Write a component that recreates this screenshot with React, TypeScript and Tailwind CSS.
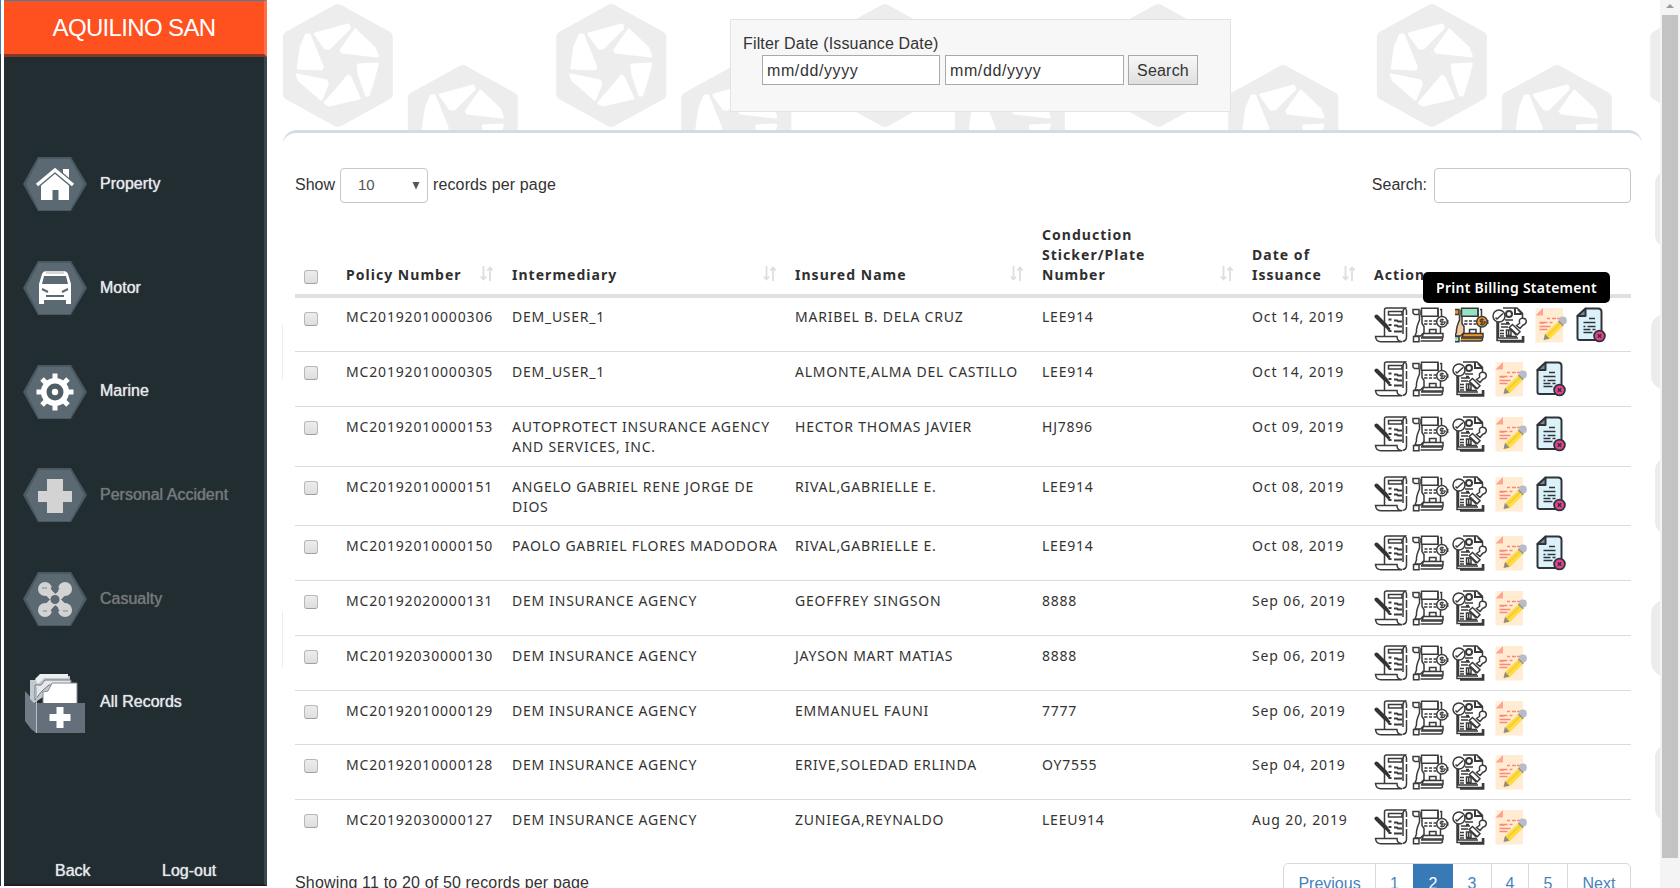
import React from "react";

type Row = {
  policy: string;
  agent: string;
  insured: string;
  plate: string;
  date: string;
  height: string;
  kind: "billing" | "full" | "short";
};

const ROWS: Row[] = [
  { policy: "MC20192010000306", agent: "DEM_USER_1", insured: "MARIBEL B. DELA CRUZ", plate: "LEE914", date: "Oct 14, 2019", height: "h-[54px]", kind: "billing" },
  { policy: "MC20192010000305", agent: "DEM_USER_1", insured: "ALMONTE,ALMA DEL CASTILLO", plate: "LEE914", date: "Oct 14, 2019", height: "h-[55px]", kind: "full" },
  { policy: "MC20192010000153", agent: "AUTOPROTECT INSURANCE AGENCY AND SERVICES, INC.", insured: "HECTOR THOMAS JAVIER", plate: "HJ7896", date: "Oct 09, 2019", height: "h-[60px]", kind: "full" },
  { policy: "MC20192010000151", agent: "ANGELO GABRIEL RENE JORGE DE DIOS", insured: "RIVAL,GABRIELLE E.", plate: "LEE914", date: "Oct 08, 2019", height: "h-[59px]", kind: "full" },
  { policy: "MC20192010000150", agent: "PAOLO GABRIEL FLORES MADODORA", insured: "RIVAL,GABRIELLE E.", plate: "LEE914", date: "Oct 08, 2019", height: "h-[55px]", kind: "full" },
  { policy: "MC20192020000131", agent: "DEM INSURANCE AGENCY", insured: "GEOFFREY SINGSON", plate: "8888", date: "Sep 06, 2019", height: "h-[55px]", kind: "short" },
  { policy: "MC20192030000130", agent: "DEM INSURANCE AGENCY", insured: "JAYSON MART MATIAS", plate: "8888", date: "Sep 06, 2019", height: "h-[55px]", kind: "short" },
  { policy: "MC20192010000129", agent: "DEM INSURANCE AGENCY", insured: "EMMANUEL FAUNI", plate: "7777", date: "Sep 06, 2019", height: "h-[54px]", kind: "short" },
  { policy: "MC20192010000128", agent: "DEM INSURANCE AGENCY", insured: "ERIVE,SOLEDAD ERLINDA", plate: "OY7555", date: "Sep 04, 2019", height: "h-[55px]", kind: "short" },
  { policy: "MC20192030000127", agent: "DEM INSURANCE AGENCY", insured: "ZUNIEGA,REYNALDO", plate: "LEEU914", date: "Aug 20, 2019", height: "h-[55px]", kind: "short" },
];

const GRID = "grid grid-cols-[51px_166px_283px_247px_210px_122px_257px]";

/* ---------- background pattern ---------- */

function Aperture({ x, y }: { x: number; y: number }) {
  return (
    <g transform={`translate(${x} ${y})`}>
      <path d="M55.5 6 104.5 33V90L55.5 117 6.5 90V33Z" fill="#ededed" stroke="#ededed" strokeWidth="12" strokeLinejoin="round" />
      <g fill="#fff" stroke="#fff" strokeWidth="3" strokeLinejoin="round">
        <path d="M33 30 66 21 67 24 47 44 43 44Z" />
        <path d="M73 26 92 44 95 52 60 48 59 46Z" />
        <path d="M76 61 95 60 91 75 86 91 84 91 77 70Z" />
        <path d="M66 72 68 74 77 94 47 101 43 99Z" />
        <path d="M15 71 44 77 45 80 39 95 17 76Z" />
        <path d="M24 31 27 31 40 63 39 65 16 64 19 43Z" />
      </g>
    </g>
  );
}

function Backdrop() {
  return (
    <svg className="absolute left-0 top-0" width="1393" height="888" viewBox="267 0 1393 888">
      <clipPath id="band"><rect x="267" y="0" width="1393" height="131" /></clipPath>
      <g clipPath="url(#band)">
        {[0, 1, 2, 3, 4, 5].map((i) => (
          <Aperture key={i} x={282.3 + i * 273.5} y={4} />
        ))}
        {[0, 1, 2, 3, 4].map((i) => (
          <Aperture key={i} x={407.3 + i * 273.5} y={65} />
        ))}
      </g>
      <g fill="#ececec">
        <path d="M1660 173q-5 5-5 10v52q0 6 5 10z" />
        <path d="M1660 315q-9 4-9 13v48q0 8 9 13z" />
        <path d="M1660 460q-5 5-5 10v52q0 6 5 10z" />
        <path d="M1660 601q-9 4-9 13v48q0 8 9 14z" />
        <path d="M1660 747q-5 5-5 10v52q0 6 5 10z" />
        <path d="M282 325h1v55h-1zM282 611h1v56h-1z" />
      </g>
    </svg>
  );
}

/* ---------- sidebar icons ---------- */

function Hexagon({ children }: { children: React.ReactNode }) {
  return (
    <svg width="66" height="56" viewBox="0 0 66 56" className="shrink-0">
      <path d="M16 1h33L65 28 49 55H16L1 28Z" fill="#4b5963" />
      <path d="M17 3h31L62 28 48 54H17L4 28Z" fill="#5b6973" />
      {children}
    </svg>
  );
}

const HouseIcon = () => (
  <Hexagon>
    <path d="M19 27 33 15 47 27V44H36.5V34h-6v10H19Z" fill="#fff" />
    <path d="M41 13h6v10l-6-5z" fill="#fff" />
    <path d="m14 30 19-16 19 16" fill="none" stroke="#5b6973" strokeWidth="6" />
    <path d="m15 29 18-15 18 15" fill="none" stroke="#fff" strokeWidth="3.4" />
  </Hexagon>
);

const CarIcon = () => (
  <Hexagon>
    <path d="M20 14q1-3 5-3h16q4 0 5 3l3 10v20h-5v-4H22v4h-5V24Z" fill="#fff" />
    <path d="M22 16h22l2 8H20Z" fill="#5b6973" />
    <path d="M24 12.5h18" stroke="#d4d8da" strokeWidth="3" />
    <path d="m20 29 6 3m20-3-6 3M24 36h18" stroke="#5b6973" strokeWidth="2" />
  </Hexagon>
);

const GearIcon = () => (
  <Hexagon>
    <g stroke="#fff" strokeWidth="5">
      <path d="M33 9.500V46.500M14.500 28H51.500M20 15 46 41M46 15 20 41" />
    </g>
    <circle cx="33" cy="28" r="14" fill="#fff" />
    <circle cx="33" cy="28" r="8.500" fill="#4f5d67" />
    <circle cx="33" cy="28" r="3.200" fill="#fff" />
  </Hexagon>
);

const CrossIcon = () => (
  <Hexagon>
    <path d="M25 12h16v12h9v11h-9v11H25V35h-9V24h9Z" fill="#d3d3d3" />
  </Hexagon>
);

const CasualtyIcon = () => (
  <Hexagon>
    <path d="M23 18 44 39M44 18 23 39" stroke="#d3d3d3" strokeWidth="8" />
    <g fill="#d3d3d3">
      <circle cx="23" cy="18" r="7" /><circle cx="43" cy="18" r="7" />
      <circle cx="23" cy="39" r="7" /><circle cx="43" cy="39" r="7" />
    </g>
    <circle cx="33" cy="28.500" r="4.500" fill="#5b6973" />
    <path d="m29 17 4 4 4-4M29 40l4-4 4 4" stroke="#5b6973" fill="none" strokeWidth="1.500" />
    <path d="M20 17h5M41 40h5M21 40h4" stroke="#a7adb1" strokeWidth="2" />
  </Hexagon>
);

const RecordsIcon = () => (
  <svg width="66" height="64" viewBox="0 0 66 64" className="shrink-0">
    <path d="M3 20 14 32V62L9 58 3 50Z" fill="#717a86" />
    <path d="M8 9h7l3-4h30v9h-9L12 32 8 28Z" fill="#c3c8cf" />
    <path d="M13 8 18 3h28v4H22l-6 6Z" fill="#eceef0" />
    <path d="M13 14h6l4-5h26v5H27l-7 6-7 9Z" fill="#e5e7ea" stroke="#707985" strokeWidth="1" />
    <path d="M21 33V21l5-1 4-8h25v21Z" fill="#fff" stroke="#818a94" />
    <path d="M14 32h49v30H14Z" fill="#656f7c" />
    <path d="M14.500 16v46" stroke="#b8bec5" />
    <path d="M34.500 36h7v7h7v7h-7v7h-7v-7h-7v-7h7Z" fill="#fff" />
  </svg>
);

const NAV = [
  { label: "Property", icon: <HouseIcon />, tone: "text-[#e4e8ea]" },
  { label: "Motor", icon: <CarIcon />, tone: "text-[#e4e8ea]" },
  { label: "Marine", icon: <GearIcon />, tone: "text-[#e4e8ea]" },
  { label: "Personal Accident", icon: <CrossIcon />, tone: "text-[#74797b]" },
  { label: "Casualty", icon: <CasualtyIcon />, tone: "text-[#74797b]" },
  { label: "All Records", icon: <RecordsIcon />, tone: "text-[#e4e8ea]" },
];

function Sidebar() {
  return (
    <aside className="flex h-[888px] w-[267px] shrink-0 flex-col bg-white">
      <div className="flex h-[886px]">
        <div className="flex w-px flex-col">
          <div className="h-[54px] bg-[#3d82ad]" />
          <div className="grow bg-[#2a3744]" />
        </div>
        <div className="ml-[3px] flex w-[263px] flex-col border-r-[3px] border-b-2 border-r-[#3c474d] border-b-[#251d20] bg-[#222d32]">
          <div className="-mr-[3px] flex h-[57px] shrink-0 items-center justify-center border-t border-b-[3px] border-t-[#3d82ad] border-b-[#82382a] border-r-[3px] border-r-[#ff7048] bg-[#ff5020]">
            <span className="whitespace-nowrap text-[24px] leading-none tracking-[-0.65px] text-white">AQUILINO SAN</span>
          </div>
          <nav className="flex flex-col pt-[75.500px]">
            {NAV.map((n) => (
              <a key={n.label} className="flex h-[103.700px] items-center pl-[18px]">
                {n.icon}
                <span className={`mb-px ml-[12px] whitespace-nowrap text-[16px] leading-none ${n.tone} [text-shadow:0_0_1px_currentColor]`}>{n.label}</span>
              </a>
            ))}
          </nav>
          <div className="mt-auto mb-[4px] flex pl-[51px] text-[16px] leading-[18px] text-[#e4e8ea] [text-shadow:0_0_1px_currentColor]">
            <span className="w-[107px]">Back</span>
            <span>Log-out</span>
          </div>
        </div>
      </div>
    </aside>
  );
}

/* ---------- action icons ---------- */

const INK = "#3b3b3b";

const ChecklistIcon = () => (
  <svg width="36" height="36" viewBox="0 0 36 36" fill="none" stroke={INK} strokeWidth="1.500">
    <path d="M10.500 29V3q0-2 2-2H31q-2 1.500-2 4V27" fill="#fff" />
    <path d="M31 1q1.500 1 1.500 3v4M32.500 10v8M32.500 20v10q0 4-4 4.500" />
    <path d="M14.500 4.500h13.500v3.500h-13.500z" />
    <path d="M14.500 12.500h3M20 13.500h3l1 1h4M14.500 18h3M20 18.500h3l1 1h4M14.500 24h3M20 24.500h8" strokeWidth="2" />
    <path d="M1.500 29.500h21.500q0 5 5 5.200H7q-5 0-5.500-5.200Z" fill="#fff" />
    <path d="m2.500 9.500 9 9" strokeWidth="4" stroke="#333" strokeLinecap="round" />
    <path d="m11 17.500 4.500 5.500" strokeWidth="3" stroke="#333" />
  </svg>
);

function BillingIcon({ color = false }: { color?: boolean }) {
  return (
    <svg width="36" height="36" viewBox="0 0 36 36" fill="none" stroke={INK} strokeWidth="1.500" className="shrink-0 overflow-visible">
      <path d="M1 2.500h6v5h-4.500l-1.500-1.500Z" fill={color ? "#e8922f" : "#fff"} />
      <path d="M28 2.500h1.500v7M9 9.500V3" />
      <path d="M7.500 8v5q-3.500 8-3 12l-1.500 4h5.500l3.500-3.500v-6l-2-3V8" fill={color ? "#f3c9a0" : "#fff"} />
      <path d="M9.500 1.200h16.500v8H9.500Z" fill={color ? "#94e3c2" : "#fff"} />
      <path d="M26 1.500v8M28.500 20v6.500" />
      <path d="M12.500 14h3m1.500 0h3m1.500 0h3M12 17h3.500m1.500 0h3m1.500 0h3" strokeWidth="1.700" />
      <path d="M17.500 22.500h6.500v4h-6.500z" />
      <path d="M11.500 26.500h19.500v3.500H10z" fill={color ? "#f0982c" : "#fff"} />
      <path d="M9 31h21.500v1q0 2-2 2H8.500" fill={color ? "#f0982c" : "#fff"} />
      <path d="M1.500 29.500h5.500v5.300h-5.500z" fill={color ? "#94e3c2" : "#fff"} />
      <circle cx="30" cy="14.800" r="5.300" fill={color ? "#f0982c" : "#fff"} />
      <path d="M31.800 12.800q-3.600-1-3.600.9t3.400 1.300-.1 2.500q-2.100.4-3.300-.4M30 11.500v7" strokeWidth="1.200" />
      <path d="M35.700 13v4" />
    </svg>
  );
}

const StampIcon = () => (
  <svg width="36" height="36" viewBox="0 0 36 36" fill="none" stroke={INK} strokeWidth="1.500">
    <path d="M5 15v18.500h25.500V29M11 1h14l5.500 5.500V12M6.500 15v16H26" />
    <path d="M8 34.800h23.500V29" strokeWidth="1.800" />
    <path d="M23 1v6h7M26 2.500l4 4" strokeWidth="2" />
    <circle cx="17" cy="7" r="3" strokeWidth="2" />
    <circle cx="7" cy="9" r="6" fill="#fff" />
    <path d="m3.500 10.500 1.500 1.500 6-5.500" />
    <path d="M13 13h8M9 17h9M9 20h7M14 15.500h3M8 23.500h4M8 26.500h4M8 29h4" />
    <path d="M14.500 23h4.500v5.500h-4.500zM16.700 23v5.500M14 29.500H25" />
    <path d="m24.500 18.500 3.200-2.200q-1.200-4.600 2.300-5.100 3.800-.2 4.300 2.800.2 3.200-3.500 4.200l-2.800 3.300Z" fill="#fff" />
    <path d="m20.500 17.500 7.500 7.200-2.800 3-8-7.200Z" fill="#fff" />
    <path d="m18 21.500 6.500 6.500" strokeWidth="2" />
  </svg>
);

const NoteIcon = () => (
  <svg width="36" height="36" viewBox="0 0 36 36">
    <path d="M10 1h20v34.500H2.500V8.500Z" fill="#ffecd3" />
    <path d="M2.500 1h7.500v7.500h-7.500Z" fill="#fff1df" />
    <path d="M10 1v7.500H2.500Z" fill="#ffa48e" />
    <path d="M14 11.500h3m2 0h4m1 0h3M6.500 15.500h8m2 0h3M6.500 19.500h11M6.500 22.500h8M6.500 16h5" stroke="#ff8873" strokeWidth="1.500" />
    <path d="m12 27 14-13.500 5 4.500-14 14-6 1.500Z" fill="#ffdc3f" />
    <path d="M13.500 29.500 28 15.500" stroke="#f6c53a" strokeWidth="1.200" />
    <path d="m10.500 33 1.500-6 4.500 4.500Z" fill="#8b8b91" />
    <circle cx="29.800" cy="13.500" r="4" fill="#b9bbc5" />
    <path d="m25.300 14 5 4.700" stroke="#8f929d" strokeWidth="1.500" />
  </svg>
);

const RemoveIcon = () => (
  <svg width="36" height="36" viewBox="0 0 36 36" stroke="#303438" strokeWidth="2" strokeLinejoin="round" className="ml-[4px]">
    <path d="M11 1.500h12q3.500 0 3.500 3.500v28H4.500q-2 0-2-2V9Z" fill="#dbf2fb" />
    <path d="M10.500 1.500v7.500h-8Z" fill="#7d8b97" />
    <path d="M14 11.500h6M8.500 15.500h12M8.500 19.500h2m2 0h8M8.500 22.500h7m2 0h3M8.500 25.500h9" strokeWidth="1.600" />
    <circle cx="24.500" cy="29" r="5.400" fill="#e8418f" strokeWidth="1.800" />
    <path d="m22.800 27.300 3.400 3.400m0-3.400-3.400 3.400" strokeWidth="1.500" />
  </svg>
);

function Actions({ kind }: { kind: Row["kind"] }) {
  return (
    <div className={`flex ${kind === "billing" ? "pt-[8.500px]" : "pt-[7.500px]"}`}>
      <div className="w-[38px] shrink-0"><ChecklistIcon /></div>
      <div className="w-[40px] shrink-0"><BillingIcon /></div>
      {kind === "billing" && (
        <div className="w-[40px] shrink-0 pl-[3px]">
          <div className="flex w-[37px] overflow-hidden">
            <div className="-ml-[3px] shrink-0 pr-[3px]"><BillingIcon color /></div>
          </div>
        </div>
      )}
      <div className="w-[40.500px] shrink-0"><StampIcon /></div>
      <div className="w-[38px] shrink-0"><NoteIcon /></div>
      {kind !== "short" && <RemoveIcon />}
    </div>
  );
}

/* ---------- table pieces ---------- */

const Checkbox = ({ top }: { top: string }) => (
  <div className={`ml-[9px] h-[14px] w-[14px] rounded-[3px] border border-[#b8b8b8] border-b-[#9f9f9f] bg-gradient-to-b from-[#ededed] to-[#dedede] ${top}`} />
);

const SortIcon = () => (
  <svg width="13" height="15" viewBox="0 0 13 15" fill="none" stroke="#dedede" strokeWidth="1.800" className="mr-[19px] mb-[4px] shrink-0">
    <path d="M3.500 0v13M.800 10.500l2.700 3 2.700-3M10 15V2M7.300 4.500l2.700-3 2.700 3" />
  </svg>
);

const HeadCell = ({ children }: { children: React.ReactNode }) => (
  <div className="flex items-end justify-between whitespace-nowrap">
    <span>{children}</span>
    <SortIcon />
  </div>
);

const DateField = ({ width }: { width: string }) => (
  <div className={`flex h-[30px] items-center border border-[#a9a9a9] bg-white pl-[4px] pt-px text-[16px] tracking-[0.6px] ${width}`}>mm/dd/yyyy</div>
);

export default function App() {
  return (
    <div className="flex h-[888px] w-[1680px] overflow-hidden bg-white font-['Liberation_Sans',Arial,sans-serif] text-[#333]">
      <Sidebar />
      <main className="relative h-[888px] w-[1393px] shrink-0 overflow-hidden">
        <Backdrop />
        <div className="relative flex h-[130px] pl-[463px] pt-[19px]">
          <section className="h-[93px] w-[501px] border border-[#e3e3e3] bg-[#f7f7f7] pl-[12px] pt-[14px]">
            <div className="h-[21px] whitespace-nowrap text-[16px] leading-[19px] tracking-[0.16px]">Filter Date (Issuance Date)</div>
            <div className="flex pl-[19px]">
              <DateField width="w-[178px]" />
              <div className="w-[5px]" />
              <DateField width="w-[179px]" />
              <button className="ml-1 h-[30px] w-[70px] border border-[#a9a9a9] bg-gradient-to-b from-[#f8f8f8] to-[#dfdfdf] pt-px text-[16px] leading-none tracking-[0.2px]">Search</button>
            </div>
          </section>
        </div>

        <section className="relative ml-[16px] h-[758px] w-[1359px] rounded-t-[14px] border-t-[3px] border-[#d5dbe6] bg-white pl-[12px] pt-[35px]">
          <div className="flex h-[35px] w-[1336px] items-center text-[16px]">
            <span className="mb-[2px]">Show</span>
            <div className="ml-[5px] flex h-[35px] w-[88px] items-center justify-between rounded-[4px] border border-[#c6c6c6] bg-white pl-[17px] pr-[7px] text-[15px] text-[#555]">
              10
              <svg width="8" height="8" viewBox="0 0 8 8"><path d="M.500 0h7L4 7.500Z" fill="#555" /></svg>
            </div>
            <span className="mb-[2px] ml-[5px] tracking-[0.12px]">records per page</span>
            <span className="mb-[2px] ml-auto">Search:</span>
            <div className="ml-[7px] h-[35px] w-[197px] rounded-[4px] border border-[#c6c6c6] bg-white" />
          </div>

          <div className="w-[1336px] font-['Noto_Sans',sans-serif] text-[14px] leading-[20px] tracking-[0.77px]">
            <div className={`${GRID} relative h-[95px] items-end border-b-4 border-[#e0e0e0] pb-[9px] font-bold tracking-[1.03px] text-[#2f2f2f]`}>
              <Checkbox top="mb-[1px]" />
              <HeadCell>Policy Number</HeadCell>
              <HeadCell>Intermediary</HeadCell>
              <HeadCell>Insured Name</HeadCell>
              <HeadCell>Conduction<br />Sticker/Plate<br />Number</HeadCell>
              <HeadCell>Date of<br />Issuance</HeadCell>
              <div>Action</div>
              <div className="absolute left-[1128px] top-[69px] z-10 flex h-[31px] w-[187px] items-center justify-center whitespace-nowrap rounded-[5px] bg-black font-semibold tracking-[0.25px] text-white">
                Print Billing Statement
              </div>
            </div>
            {ROWS.map((r, i) => (
              <div key={r.policy} className={`${GRID} ${r.height} ${i > 0 ? "pt-px" : ""} ${i < 9 ? "border-b border-[#dcdcdc]" : ""}`}>
                <Checkbox top={i > 0 ? "mt-[13px]" : "mt-[14px]"} />
                <div className="pt-[9px] tracking-[0.84px]">{r.policy}</div>
                <div className="pr-[14px] pt-[8.500px] tracking-[0.74px]">{r.agent}</div>
                <div className="whitespace-nowrap pt-[9px]">{r.insured}</div>
                <div className="pt-[9px]">{r.plate}</div>
                <div className="whitespace-nowrap pt-[9px] tracking-[0.87px]">{r.date}</div>
                <Actions kind={r.kind} />
              </div>
            ))}
          </div>

          <div className="flex w-[1336px] justify-between pt-[10px] text-[16px]">
            <span className="pt-[8px] leading-[20px] tracking-[0.16px]">Showing 11 to 20 of 50 records per page</span>
            <div className="-mt-[2px] flex h-[37px] overflow-hidden rounded-[5px] border border-[#d8d8d8] leading-[40px] text-[#4682bd]">
              <span className="w-[92px] border-r border-[#d8d8d8] text-center">Previous</span>
              <span className="w-[37px] text-center">1</span>
              <span className="w-[40px] bg-[#3879b7] text-center text-white">2</span>
              <span className="w-[39px] border-r border-[#d8d8d8] text-center">3</span>
              <span className="w-[37px] border-r border-[#d8d8d8] text-center">4</span>
              <span className="w-[39px] border-r border-[#d8d8d8] text-center">5</span>
              <span className="w-[62px] text-center">Next</span>
            </div>
          </div>
        </section>
      </main>
      <div className="flex w-[20px] shrink-0 flex-col items-center bg-[#f4f4f4]">
        <svg width="8" height="15" viewBox="0 0 8 15"><path d="M0 8 4 4l4 4Z" fill="#9b9b9b" /></svg>
        <div className="h-[843px] w-[16px] bg-[#c3c3c3]" />
      </div>
    </div>
  );
}
